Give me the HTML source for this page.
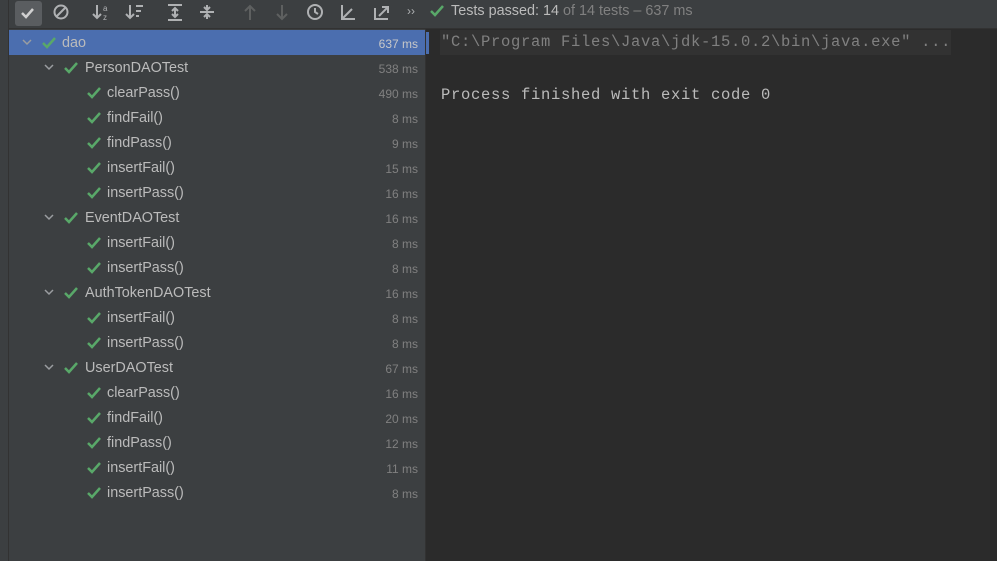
<!DOCTYPE html><html><head><style>
body{margin:0;width:997px;height:561px;background:#2b2b2b;font-family:"Liberation Sans",sans-serif;overflow:hidden;position:relative}
.strip{position:absolute;left:0;top:0;width:8px;height:561px;background:#3c3f41;border-right:1px solid #323232}
.tb{position:absolute;left:9px;top:0;width:988px;height:28px;background:#3c3f41;border-bottom:1px solid #323232}
.left{position:absolute;left:9px;top:29px;width:416px;height:532px;background:#3c3f41;border-right:1px solid #323232}
.row{position:absolute;left:0;width:416px;height:25px;font-size:14.4px;color:#bbbbbb}
.row .t{position:absolute;top:5px}
.row .ms{position:absolute;right:7px;top:7px;font-size:12px;color:#808080}
.sel{background:#4b6eaf}
.sel .ms{color:#c8c8c8}
.chk{position:absolute;top:7px;width:14px;height:12px}
.chev{position:absolute;top:9px;width:10px;height:7px}
.mono{font-family:"Liberation Mono",monospace;font-size:15.5px;letter-spacing:0.7px;color:#bbbbbb;position:absolute}
</style></head><body>
<div class="strip"></div>
<div class="tb">
<div style="position:absolute;left:6px;top:1px;width:27px;height:25px;background:#5a5d60;border-radius:3px"></div>
<svg style="position:absolute;left:0;top:0" width="420" height="28" fill="none" stroke="#afb1b3" stroke-width="2">
<path d="M13 13l4 4 7-8" stroke="#d0d0d0" stroke-width="2.5"/>
<circle cx="52" cy="12" r="6.5"/><path d="M47 17l10-10"/>
<path d="M88 5v13M84 14l4 4 4-4" /><text x="94" y="11" font-size="8" fill="#afb1b3" stroke="none">a</text><text x="94" y="20" font-size="8" fill="#afb1b3" stroke="none">z</text>
<path d="M121 5v13M117 14l4 4 4-4M127 6h7M127 11h5M127 16h3"/>
<path d="M159 5h14M159 20h14M166 8v9M163 11l3-3 3 3M163 14l3 3 3-3"/>
<path d="M191 12h14M198 5v4M195 7l3 3 3-3M198 19v-4M195 17l3-3 3 3"/>
<path d="M241 20V6M236 11l5-5 5 5" stroke="#5e6060"/>
<path d="M273 5v14M268 14l5 5 5-5" stroke="#5e6060"/>
<circle cx="306" cy="12" r="7"/><path d="M306 8v4l3 2"/>
<path d="M333 5v14h13M333 19l10-10M337 19h-4v-4"/>
<path d="M366 8v11h13M370 16l9-9M373 7h6v6"/>
</svg>
<div style="position:absolute;left:398px;top:4px;color:#afb1b3;font-size:12px">››</div>
<svg class="chk" style="left:421px;top:5px" viewBox="0 0 14 12"><path d="M1 6l4 4 8-9" stroke="#59a869" stroke-width="2.5" fill="none"/></svg>
<div style="position:absolute;left:442px;top:3px;font-size:14.4px;color:#bbbbbb">Tests passed: 14 <span style="color:#808080">of 14 tests – 637 ms</span></div>
</div>
<div class="left" id="L"></div>
<div style="position:absolute;left:426px;top:32px;width:3px;height:22px;background:#4b6eaf"></div>
<div style="position:absolute;left:440px;top:30px;width:511px;height:25px;background:#323232"></div>
<div class="mono" style="left:441px;top:33px;color:#808080">"C:\Program Files\Java\jdk-15.0.2\bin\java.exe" ...</div>
<div class="mono" style="left:441px;top:86px">Process finished with exit code 0</div>
<script>
var rows=[[0,'dao','637 ms'],[1,'PersonDAOTest','538 ms'],[2,'clearPass()','490 ms'],[2,'findFail()','8 ms'],[2,'findPass()','9 ms'],[2,'insertFail()','15 ms'],[2,'insertPass()','16 ms'],[1,'EventDAOTest','16 ms'],[2,'insertFail()','8 ms'],[2,'insertPass()','8 ms'],[1,'AuthTokenDAOTest','16 ms'],[2,'insertFail()','8 ms'],[2,'insertPass()','8 ms'],[1,'UserDAOTest','67 ms'],[2,'clearPass()','16 ms'],[2,'findFail()','20 ms'],[2,'findPass()','12 ms'],[2,'insertFail()','11 ms'],[2,'insertPass()','8 ms']];
var h='';rows.forEach(function(r,i){var l=r[0];var cx=[13,35,0][l],kx=[33,55,78][l],tx=[53,76,98][l];
h+='<div class="row'+(i==0?' sel':'')+'" style="top:'+(1+i*25)+'px">'+(l<2?'<svg class="chev" style="left:'+cx+'px" viewBox="0 0 10 7"><path d="M1 1l4 4 4-4" stroke="#9a9da0" stroke-width="1.5" fill="none"/></svg>':'')+'<svg class="chk" style="left:'+kx+'px" viewBox="0 0 14 12"><path d="M1 6l4 4 8-9" stroke="#59a869" stroke-width="2.5" fill="none"/></svg><span class="t" style="left:'+tx+'px">'+r[1]+'</span><span class="ms">'+r[2]+'</span></div>';});
document.getElementById('L').innerHTML=h;
</script>
</body></html>
